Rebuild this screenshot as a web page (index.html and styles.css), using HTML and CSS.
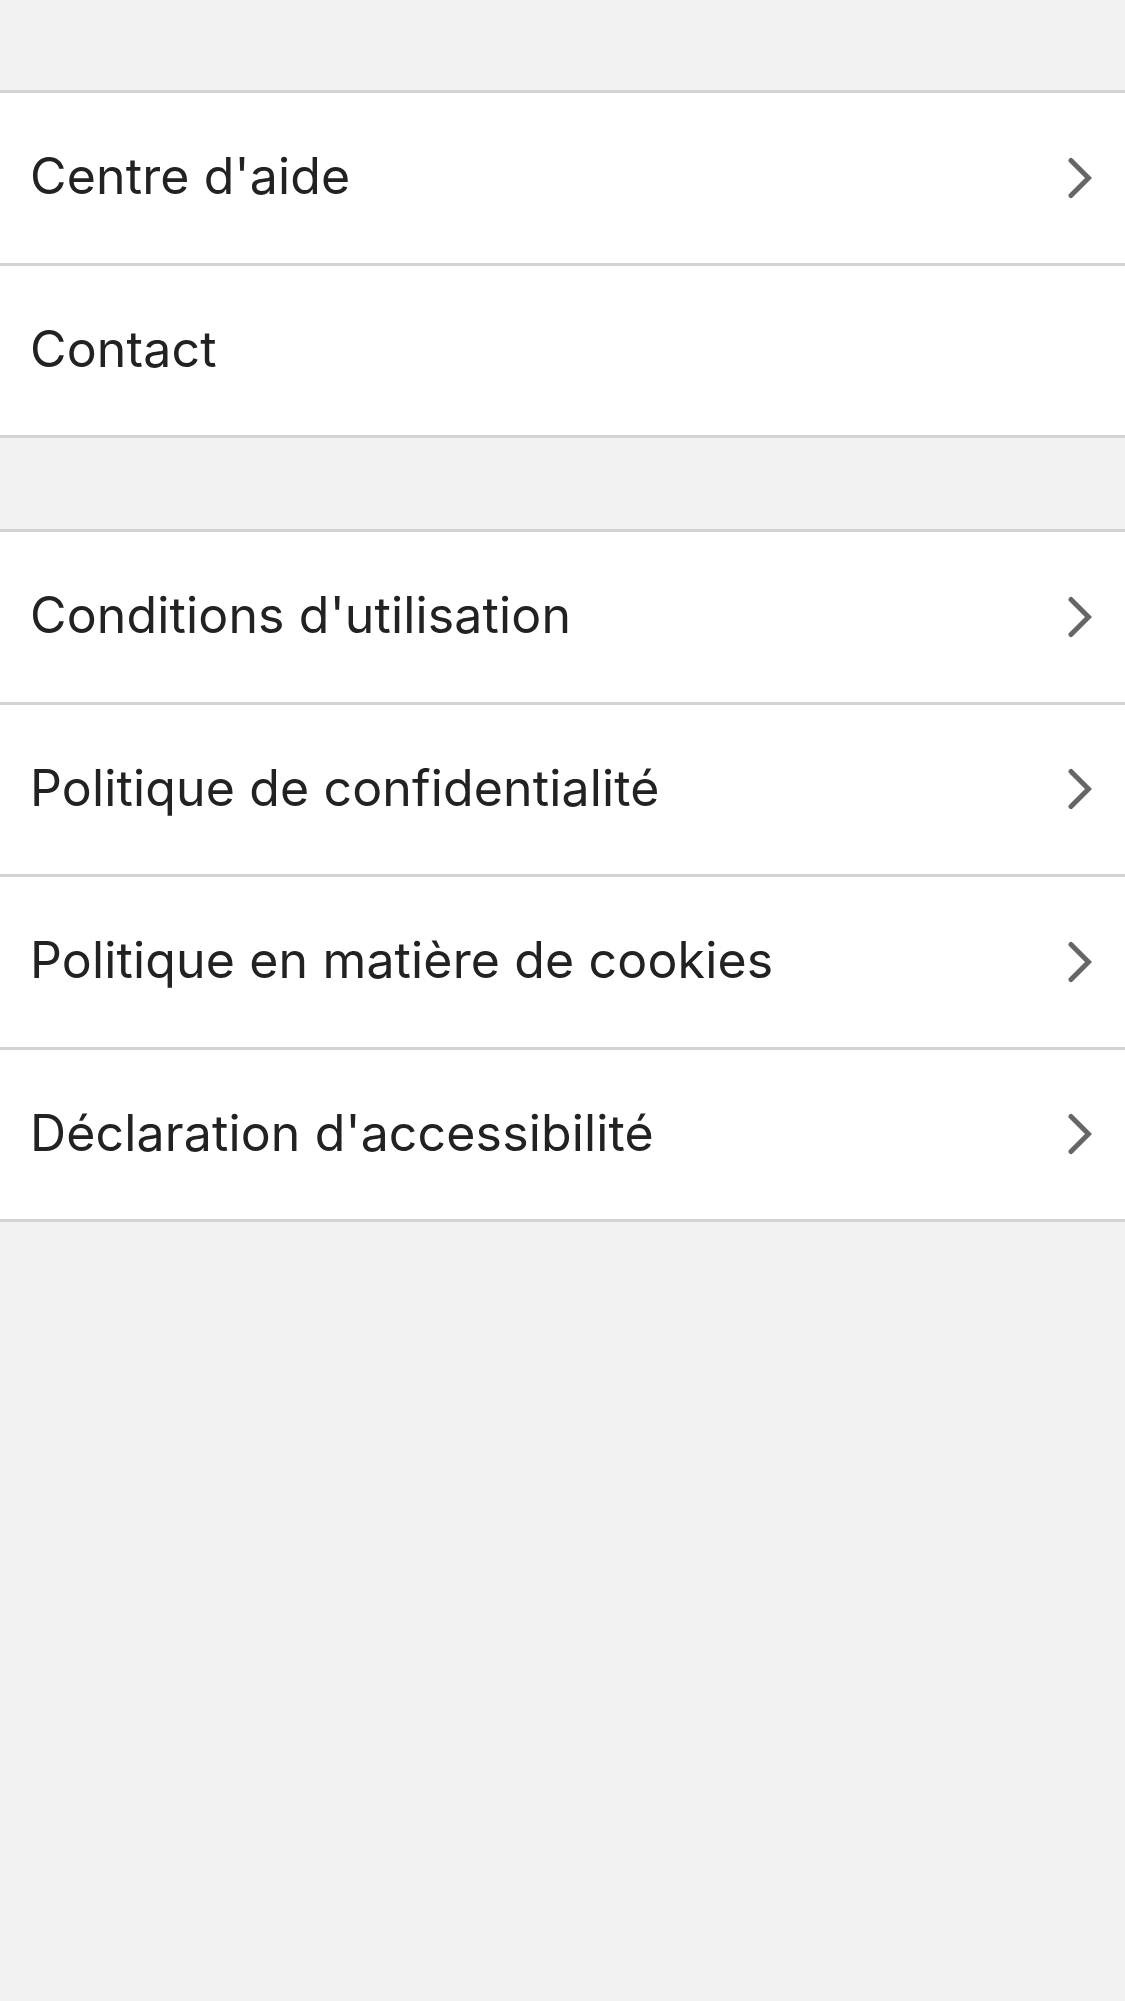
FILE: index.html
```html
<!DOCTYPE html>
<html lang="fr">
<head>
<meta charset="utf-8">
<title>Aide</title>
<link rel="stylesheet" href="styles.css">
</head>
<body>
<div class="page">
  <ul class="group">
    <li class="row"><span class="label">Centre d'aide</span><svg class="chev" viewBox="0 0 24 42"><path d="M3 3.5 L20.5 21 L3 38.5"/></svg></li>
    <li class="row"><span class="label">Contact</span></li>
  </ul>
  <ul class="group">
    <li class="row"><span class="label">Conditions d'utilisation</span><svg class="chev" viewBox="0 0 24 42"><path d="M3 3.5 L20.5 21 L3 38.5"/></svg></li>
    <li class="row"><span class="label">Politique de confidentialité</span><svg class="chev" viewBox="0 0 24 42"><path d="M3 3.5 L20.5 21 L3 38.5"/></svg></li>
    <li class="row"><span class="label">Politique en matière de cookies</span><svg class="chev" viewBox="0 0 24 42"><path d="M3 3.5 L20.5 21 L3 38.5"/></svg></li>
    <li class="row"><span class="label">Déclaration d'accessibilité</span><svg class="chev" viewBox="0 0 24 42"><path d="M3 3.5 L20.5 21 L3 38.5"/></svg></li>
  </ul>
</div>
</body>
</html>
```
FILE: styles.css
```css
html, body {
  margin: 0;
  padding: 0;
  background: #f2f2f2;
}
body {
  font-family: Inter, "Noto Sans", "Liberation Sans", sans-serif;
  color: #222222;
  min-height: 2001px;
}
.page {
  display: flex;
  flex-direction: column;
  gap: 91px;
  padding-top: 90px;
}
.group {
  list-style: none;
  margin: 0;
  padding: 0;
  background: #ffffff;
  border-top: 3px solid #d3d3d3;
}
.row {
  display: flex;
  align-items: center;
  justify-content: space-between;
  height: 169.5px;
  border-bottom: 3px solid #d3d3d3;
  padding: 0 33px 0 30px;
}
.label {
  font-size: 50px;
  line-height: 1;
  letter-spacing: 0.15px;
  margin-top: -3px;
}
.chev {
  width: 24px;
  height: 42px;
  flex: none;
}
.chev path {
  fill: none;
  stroke: #666666;
  stroke-width: 5;
  stroke-linecap: round;
  stroke-linejoin: miter;
}
```
